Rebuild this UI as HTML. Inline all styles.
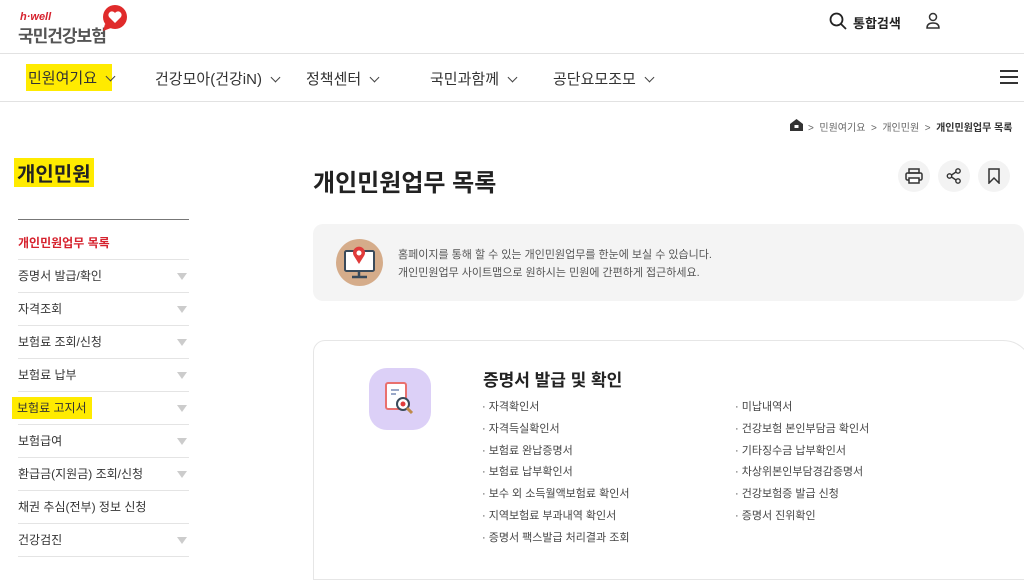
<!DOCTYPE html>
<html><head><meta charset="utf-8"><style>
*{margin:0;padding:0;box-sizing:border-box}
body{width:1024px;height:555px;overflow:hidden;background:#fff;font-family:"Liberation Sans","Noto Sans CJK KR",sans-serif;color:#333;position:relative}
.a{position:absolute;white-space:nowrap}
.hl{background:#ffeb00}
.nav{font-size:15px;color:#333;top:68px}
.chev{display:inline-block;width:7px;height:7px;border-right:1.5px solid #444;border-bottom:1.5px solid #444;transform:rotate(45deg);margin-left:10px;position:relative;top:-3px}
.side{position:absolute;left:18px;width:171px;height:33px;border-bottom:1px solid #e4e4e4;font-size:12px;color:#333;line-height:33px}
.side .t{position:absolute;right:2px;top:13px;width:0;height:0;border-left:5px solid transparent;border-right:5px solid transparent;border-top:7px solid #ccc}
.li{position:absolute;font-size:11px;color:#444;white-space:nowrap}
.li:before{content:"· ";}
.btn{position:absolute;top:160px;width:32px;height:32px;border-radius:50%;background:#f3f3f3}
</style></head><body>
<div class="a" style="left:20px;top:11px;font-size:11px;color:#d6222e;font-style:italic;font-weight:bold">h·well</div>
<div class="a" style="left:18px;top:22px;font-size:17px;color:#555;font-weight:bold;letter-spacing:-1px">국민건강보험</div>
<svg class="a" style="left:101px;top:4px" width="28" height="28" viewBox="0 0 28 28"><circle cx="14" cy="13" r="12" fill="#e02b2b"/><path d="M14 19 L8 13 A3.5 3.5 0 0 1 14 9 A3.5 3.5 0 0 1 20 13Z" fill="#fff"/><path d="M4 20 L2 27 L10 24Z" fill="#e02b2b"/></svg>
<svg class="a" style="left:829px;top:12px" width="18" height="18" viewBox="0 0 18 18"><circle cx="7.5" cy="7.5" r="6" fill="none" stroke="#222" stroke-width="1.8"/><path d="M12 12 L17 17" stroke="#222" stroke-width="1.8"/></svg>
<div class="a" style="left:853px;top:13px;font-size:13px;font-weight:bold;color:#222">통합검색</div>
<svg class="a" style="left:925px;top:12px" width="16" height="18" viewBox="0 0 16 18"><circle cx="8" cy="5" r="3.5" fill="none" stroke="#333" stroke-width="1.5"/><path d="M2 16 Q2 11 8 11 Q14 11 14 16Z" fill="none" stroke="#333" stroke-width="1.5"/></svg>
<div class="a" style="left:0;top:53px;width:1024px;height:1px;background:#e2e2e2"></div>
<div class="a" style="left:0;top:101px;width:1024px;height:1px;background:#e2e2e2"></div>
<div class="a nav hl" style="left:26px;top:64px;padding:3px 2px;width:86px">민원여기요<span class="chev"></span></div>
<div class="a nav" style="left:155px">건강모아(건강iN)<span class="chev"></span></div>
<div class="a nav" style="left:306px">정책센터<span class="chev"></span></div>
<div class="a nav" style="left:430px">국민과함께<span class="chev"></span></div>
<div class="a nav" style="left:553px">공단요모조모<span class="chev"></span></div>
<div class="a" style="left:1000px;top:70px;width:18px;height:2px;background:#333;box-shadow:0 6px 0 #333,0 12px 0 #333"></div>
<svg class="a" style="left:790px;top:119px" width="13" height="12" viewBox="0 0 13 12"><path d="M0 5 L6.5 0 L13 5 V12 H0Z" fill="#333"/><rect x="4.5" y="6" width="4" height="3" fill="#fff"/></svg>
<div class="a" style="left:808px;top:119px;font-size:10px;color:#666">&gt; &nbsp;민원여기요 &nbsp;&gt; &nbsp;개인민원 &nbsp;&gt; &nbsp;<b style="color:#333">개인민원업무 목록</b></div>
<div class="a hl" style="left:14px;top:158px;font-size:20px;font-weight:bold;color:#222;padding:0 3px">개인민원</div>
<div class="a" style="left:18px;top:219px;width:171px;height:1px;background:#777"></div>
<div class="side" style="top:227px;color:#d6222e;font-weight:bold">개인민원업무 목록</div>
<div class="side" style="top:260px">증명서 발급/확인<span class="t"></span></div>
<div class="side" style="top:293px">자격조회<span class="t"></span></div>
<div class="side" style="top:326px">보험료 조회/신청<span class="t"></span></div>
<div class="side" style="top:359px">보험료 납부<span class="t"></span></div>
<div class="side" style="top:392px"><span class="hl" style="margin-left:-6px;padding:4px 5px">보험료 고지서</span><span class="t"></span></div>
<div class="side" style="top:425px">보험급여<span class="t"></span></div>
<div class="side" style="top:458px">환급금(지원금) 조회/신청<span class="t"></span></div>
<div class="side" style="top:491px">채권 추심(전부) 정보 신청</div>
<div class="side" style="top:524px">건강검진<span class="t"></span></div>
<div class="a" style="left:313px;top:163px;font-size:24px;font-weight:bold;color:#222">개인민원업무 목록</div>
<div class="btn" style="left:898px"></div><div class="btn" style="left:938px"></div><div class="btn" style="left:978px"></div>
<svg class="a" style="left:905px;top:168px" width="18" height="16" viewBox="0 0 18 16"><rect x="4" y="1" width="10" height="4" fill="none" stroke="#333" stroke-width="1.5"/><rect x="1" y="5" width="16" height="7" rx="1.5" fill="none" stroke="#333" stroke-width="1.5"/><rect x="4" y="10" width="10" height="5" fill="#fff" stroke="#333" stroke-width="1.5"/></svg>
<svg class="a" style="left:946px;top:168px" width="16" height="16" viewBox="0 0 16 16"><circle cx="12" cy="3" r="2.2" fill="none" stroke="#333" stroke-width="1.4"/><circle cx="3.5" cy="8" r="2.2" fill="none" stroke="#333" stroke-width="1.4"/><circle cx="12" cy="13" r="2.2" fill="none" stroke="#333" stroke-width="1.4"/><path d="M5.5 7 L10 4 M5.5 9 L10 12" stroke="#333" stroke-width="1.4"/></svg>
<svg class="a" style="left:988px;top:168px" width="12" height="16" viewBox="0 0 12 16"><path d="M1 1 H11 V15 L6 10 L1 15Z" fill="none" stroke="#333" stroke-width="1.5"/></svg>
<div class="a" style="left:313px;top:224px;width:711px;height:77px;background:#f4f4f4;border-radius:10px"></div>
<svg class="a" style="left:336px;top:239px" width="47" height="47" viewBox="0 0 47 47"><circle cx="23.5" cy="23.5" r="23.5" fill="#d5ac8a"/><rect x="9" y="12" width="29" height="20" rx="1.5" fill="#fff" stroke="#3a4a5a" stroke-width="2"/><path d="M23 32 V37 M16 38 H31" stroke="#3a4a5a" stroke-width="2.5"/><path d="M23 25 L18 17 A6 6 0 1 1 28 17Z" fill="#e03b3b"/><circle cx="23" cy="14" r="2.5" fill="#fff"/></svg>
<div class="a" style="left:398px;top:246px;font-size:11px;color:#555;line-height:18px">홈페이지를 통해 할 수 있는 개인민원업무를 한눈에 보실 수 있습니다.<br>개인민원업무 사이트맵으로 원하시는 민원에 간편하게 접근하세요.</div>
<div class="a" style="left:313px;top:340px;width:720px;height:240px;border:1px solid #e6e6e6;border-radius:12px 30px 0 0"></div>
<div class="a" style="left:369px;top:368px;width:62px;height:62px;border-radius:18px;background:#dcd0f7"></div>
<svg class="a" style="left:384px;top:381px" width="32" height="36" viewBox="0 0 32 36"><rect x="2" y="2" width="20" height="26" rx="2" fill="#fff" stroke="#e9706e" stroke-width="2"/><path d="M7 9 H15 M7 13 H12" stroke="#9aa8c8" stroke-width="2"/><circle cx="19" cy="23" r="6" fill="#fff" stroke="#3a4a5a" stroke-width="2"/><circle cx="19" cy="23" r="2.5" fill="#e03b3b"/><path d="M23 27 L28 32" stroke="#c08a4a" stroke-width="3"/></svg>
<div class="a" style="left:483px;top:366px;font-size:17px;font-weight:bold;color:#222">증명서 발급 및 확인</div>
<div class="li" style="left:482px;top:398px">자격확인서</div>
<div class="li" style="left:482px;top:420px">자격득실확인서</div>
<div class="li" style="left:482px;top:442px">보험료 완납증명서</div>
<div class="li" style="left:482px;top:463px">보험료 납부확인서</div>
<div class="li" style="left:482px;top:485px">보수 외 소득월액보험료 확인서</div>
<div class="li" style="left:482px;top:507px">지역보험료 부과내역 확인서</div>
<div class="li" style="left:482px;top:529px">증명서 팩스발급 처리결과 조회</div>
<div class="li" style="left:735px;top:398px">미납내역서</div>
<div class="li" style="left:735px;top:420px">건강보험 본인부담금 확인서</div>
<div class="li" style="left:735px;top:442px">기타징수금 납부확인서</div>
<div class="li" style="left:735px;top:463px">차상위본인부담경감증명서</div>
<div class="li" style="left:735px;top:485px">건강보험증 발급 신청</div>
<div class="li" style="left:735px;top:507px">증명서 진위확인</div>
</body></html>
